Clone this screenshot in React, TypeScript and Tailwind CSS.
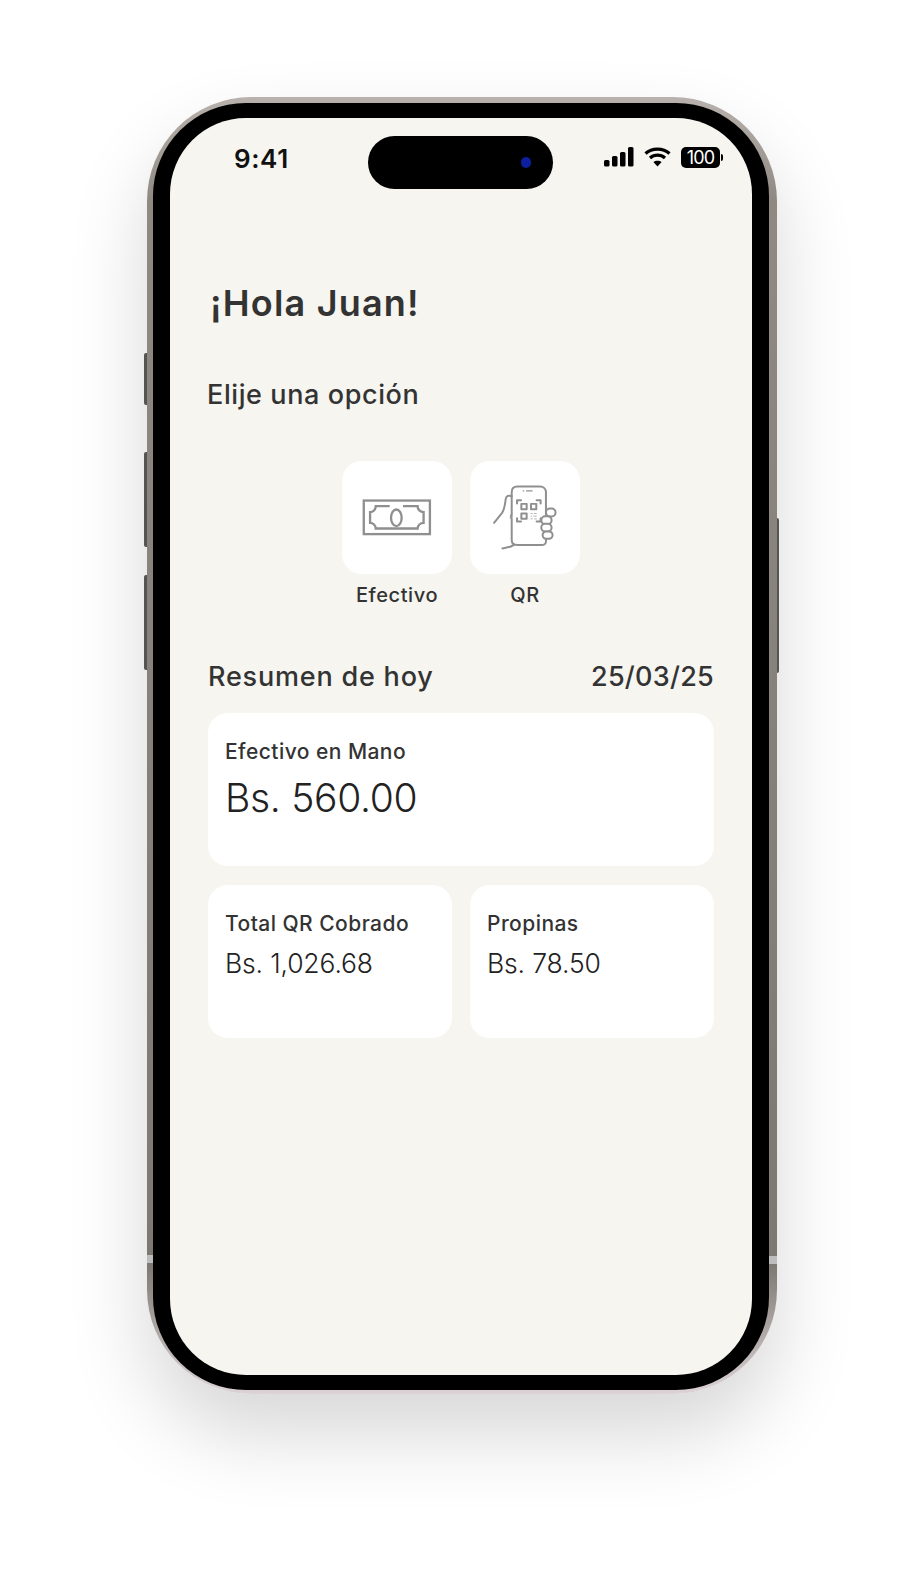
import React from 'react';

function CashIcon() {
  return (
    <svg viewBox="35 32 330 340" className="w-full h-full" fill="none" stroke="#8f8f8f" strokeWidth="7">
      <rect x="100" y="151" width="199" height="101" />
      <path d="M178 168H136C136 178 128 186 119 186V218C128 218 136 226 136 235H262C262 226 270 218 280 218V186C270 186 262 178 262 168H218" />
      <ellipse cx="198" cy="203" rx="16" ry="25" />
    </svg>
  );
}

function QrIcon() {
  return (
    <svg viewBox="420 32 330 340" className="w-full h-full" fill="none" stroke="#8f8f8f" strokeWidth="6" strokeLinecap="round" strokeLinejoin="round">
      <path d="M545 200V126C545 115 552 109 562 109H630C641 109 648 116 648 126V275C648 281 642 285 635 285H562C552 285 545 280 545 270V205" />
      <path d="M545 138C536 134 529 137 527 146C525 165 523 178 516 188L492 218" />
      <path d="M517 295L540 290C545 288 548 286 552 285" />
      <path d="M545 190C541 195 540 200 541 205" strokeWidth="3" />
      <rect x="648" y="175" width="29" height="24" rx="12" fill="#fff" />
      <rect x="634" y="198" width="31" height="24" rx="12" fill="#fff" />
      <rect x="634" y="221" width="31" height="23" rx="11" fill="#fff" />
      <rect x="638" y="244" width="30" height="22" rx="11" fill="#fff" />
      <path d="M590 122H606M580 122H581" strokeWidth="4" />
      <path d="M561 160V150H573M620 150H632V160M561 204V214H573M620 214H632V204" />
      <rect x="574" y="161" width="16" height="16" />
      <rect x="603" y="161" width="16" height="16" />
      <rect x="574" y="190" width="16" height="16" />
      <path d="M603 190H607M613 190H619M603 198H605M611 198H619M603 206H607M614 206H619" strokeWidth="3" stroke="#b5b5b5" />
    </svg>
  );
}

function StatusIcons() {
  return (
    <div className="flex items-start justify-end gap-[10px] pr-[29px] pt-[11px]">
      <svg width="30" height="20" viewBox="0 0 30 20" fill="#000">
        <rect x="0" y="13" width="5.5" height="6.5" rx="1.5" />
        <rect x="8" y="9" width="5.5" height="10.5" rx="1.5" />
        <rect x="16" y="5" width="5.5" height="14.5" rx="1.5" />
        <rect x="24" y="0" width="5.5" height="19.5" rx="1.5" />
      </svg>
      <svg width="27" height="20" viewBox="0 0 27 20" fill="none" stroke="#000" strokeWidth="3.2">
        <path d="M1.5 6.5C8 0.6 19 0.6 25.5 6.5" />
        <path d="M6 11C10.4 7.2 16.6 7.2 21 11" />
        <path d="M13.5 19.5L9.4 15C11.6 13.3 15.4 13.3 17.6 15Z" fill="#000" stroke="none" />
      </svg>
      <div className="flex items-center">
        <div className="w-[39px] h-[21px] rounded-[5px] bg-black text-white text-[18px] leading-[21px] text-center tracking-[-0.8px]">
          100
        </div>
        <div className="w-[2px] h-[7px] ml-[1px] rounded-r-[2px] bg-black" />
      </div>
    </div>
  );
}

function OptionButton({ label, icon }: { label: string; icon: React.ReactNode }) {
  return (
    <div className="w-[110px] flex flex-col items-center">
      <div className="w-[110px] h-[113px] rounded-[20px] bg-white">{icon}</div>
      <span className="mt-2 whitespace-nowrap text-[20px] leading-[26px] font-[550] tracking-[0.6px] text-[#333]">{label}</span>
    </div>
  );
}

function StatCard({ label, value, big }: { label: string; value: string; big?: boolean }) {
  return (
    <div className="h-[153px] rounded-[20px] bg-white pl-[17px] pt-[25px]">
      <p className="text-[21px] leading-[28px] font-[550] tracking-[0.45px] text-[#333]">{label}</p>
      {big ? (
        <p className="mt-[7px] text-[39px] leading-[50px] font-light tracking-[-0.3px] text-[#222]">{value}</p>
      ) : (
        <p className="mt-[7px] text-[26.5px] leading-[36px] font-light tracking-[-0.15px] text-[#222]">{value}</p>
      )}
    </div>
  );
}

export default function App() {
  return (
    <div className="w-[922px] h-[1588px] overflow-hidden bg-white pt-[97px] pl-[147px] font-['Inter',sans-serif]">
      <div className="relative w-[630px]">
        {/* side buttons */}
        <div className="absolute left-[-3px] top-[256px] w-[4px] h-[52px] rounded-l-[2px] bg-[#5e5c5a]" />
        <div className="absolute left-[-3px] top-[355px] w-[4px] h-[95px] rounded-l-[2px] bg-[#5e5c5a]" />
        <div className="absolute left-[-3px] top-[478px] w-[4px] h-[95px] rounded-l-[2px] bg-[#5e5c5a]" />
        <div className="absolute right-[-2px] top-[421px] w-[3px] h-[155px] rounded-r-[2px] bg-[#5f5f58]" />

        <div className="relative h-[1297px] rounded-[104px] bg-[linear-gradient(180deg,#b8b1ad_0%,#8f8982_8%,#7d7872_90%,#ddd3d6_100%)] pt-[6px] pl-[6px] pr-[8px] pb-[4px] shadow-[0_40px_80px_rgba(0,0,0,0.16)]">
          {/* antenna bands */}
          <div className="absolute left-0 top-[1158px] w-[6px] h-[8px] bg-[#bdbdbd]" />
          <div className="absolute right-0 top-[1159px] w-[8px] h-[8px] bg-[#bdbdbd]" />

          <div className="h-full rounded-[93px] bg-black pt-[15px] pl-[17px] pr-[17px] pb-[15px]">
            <div className="h-full rounded-[76px] bg-[#f6f5ef] overflow-hidden">
              {/* status bar */}
              <div className="grid grid-cols-[198px_185px_1fr] pt-[18px]">
                <div className="pl-[64px] pt-[6px] text-[26px] leading-[34px] font-semibold tracking-[0.6px] text-[#111]">9:41</div>
                <div className="h-[53px] rounded-full bg-black flex items-center justify-end pr-[22px]">
                  <div className="w-[10px] h-[11px] rounded-full bg-[#0d1f9c]" />
                </div>
                <StatusIcons />
              </div>

              <div className="px-[38px]">
                <h1 className="mt-[92px] pl-[2px] text-[36px] leading-[44px] font-semibold tracking-[1.2px] text-[#333]">¡Hola Juan!</h1>
                <h2 className="mt-[53px] -ml-px text-[27px] leading-[34px] font-[550] tracking-[0.6px] text-[#333]">Elije una opción</h2>

                <div className="mt-[49px] flex justify-center gap-[18px]">
                  <OptionButton label="Efectivo" icon={<CashIcon />} />
                  <OptionButton label="QR" icon={<QrIcon />} />
                </div>

                <div className="mt-[52px] flex items-center justify-between">
                  <span className="text-[27px] leading-[34px] font-[550] tracking-[0.8px] text-[#333]">Resumen de hoy</span>
                  <span className="text-[27px] leading-[34px] font-[550] tracking-[0.25px] text-[#333]">25/03/25</span>
                </div>

                <div className="mt-[19px] grid grid-cols-2 gap-x-[18px] gap-y-[19px]">
                  <div className="col-span-2">
                    <StatCard label="Efectivo en Mano" value="Bs. 560.00" big />
                  </div>
                  <StatCard label="Total QR Cobrado" value="Bs. 1,026.68" />
                  <StatCard label="Propinas" value="Bs. 78.50" />
                </div>
              </div>
            </div>
          </div>
        </div>
      </div>
    </div>
  );
}
